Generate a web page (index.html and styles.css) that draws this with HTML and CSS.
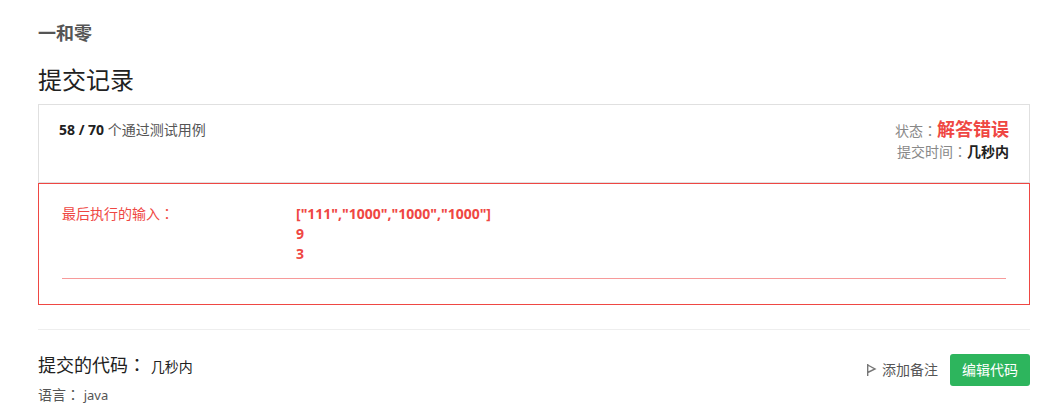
FILE: index.html
```
<!DOCTYPE html>
<html lang="zh-CN">
<head>
<meta charset="utf-8">
<title>一和零</title>
<link rel="stylesheet" href="styles.css">
</head>
<body>
<main class="page">
  <h1 class="problem">一和零</h1>
  <h2 class="heading">提交记录</h2>
  <section class="summary">
    <p class="cases"><strong>58 / 70</strong> 个通过测试用例</p>
    <div class="result">
      <p class="status">状态<span class="colon" lang="zh-TW">：</span><strong class="verdict">解答错误</strong></p>
      <p class="time">提交时间<span class="colon" lang="zh-TW">：</span><strong>几秒内</strong></p>
    </div>
  </section>
  <section class="error">
    <dl class="input">
      <dt>最后执行的输入<span class="colon" lang="zh-TW">：</span></dt>
      <dd>["111","1000","1000","1000"]<br>9<br>3</dd>
    </dl>
  </section>
  <section class="code">
    <div>
      <h3 class="code-title">提交的代码<span class="colon" lang="zh-TW">：</span> <small>几秒内</small></h3>
      <p class="language">语言<span class="colon" lang="zh-TW">：</span> <span class="lang-name">java</span></p>
    </div>
    <div class="actions">
      <button class="note" type="button">
        <svg class="flag" viewBox="0 0 10 14" aria-hidden="true"><path d="M.7 1v12M.7 2L8 6L.7 9.5"/></svg>
        添加备注
      </button>
      <button class="edit" type="button">编辑代码</button>
    </div>
  </section>
</main>
</body>
</html>
```
FILE: styles.css
```
* { box-sizing: border-box; }
body {
  margin: 0;
  background: #fff;
  color: #555;
  font: 14px/20px "Noto Sans", "Noto Sans CJK SC", sans-serif;
}
h1, h2, h3, p, dl, dd { margin: 0; }
.colon { font-family: "Noto Sans CJK TC", sans-serif; line-height: 1; }
.page { padding: 20px 17px 0 38px; }
.problem { font-size: 18px; line-height: 26px; color: #555; }
.heading { margin-top: 20px; font-size: 24px; line-height: 28px; font-weight: 400; color: #212121; }
.summary {
  display: flex;
  justify-content: space-between;
  margin-top: 10px;
  padding: 15px 20px 20px;
  border: 1px solid #e0e0e0;
}
.summary strong { color: #212121; }
.result { margin-top: -2px; text-align: right; color: #888; }
.status { line-height: 22px; }
.summary .verdict { font-size: 18px; color: #ef4743; }
.error {
  padding: 20px 23px 25px;
  border: 1px solid #ef4743;
  color: #ef4743;
}
.input {
  display: grid;
  grid-template-columns: 234px 1fr;
  padding-bottom: 14px;
  border-bottom: 1px solid #f79a9a;
}
.input dd { font-weight: 700; }
.code {
  display: flex;
  justify-content: space-between;
  align-items: flex-start;
  margin-top: 24px;
  padding-top: 24px;
  border-top: 1px solid #eee;
}
.code-title { font-size: 18px; line-height: 22px; font-weight: 400; color: #212121; }
.code-title small { font-size: 14px; }
.language { margin-top: 7px; }
.lang-name { font-size: 13px; }
.actions { display: flex; gap: 12px; }
button { border: 0; font: inherit; cursor: pointer; }
.note { display: flex; align-items: center; gap: 5px; padding: 0; background: none; color: #555; }
.flag { width: 10px; height: 14px; fill: none; stroke: #777; stroke-width: 1.4; }
.edit { height: 32px; padding: 0 12px; border-radius: 3px; background: #2db55d; color: #fff; }
```
